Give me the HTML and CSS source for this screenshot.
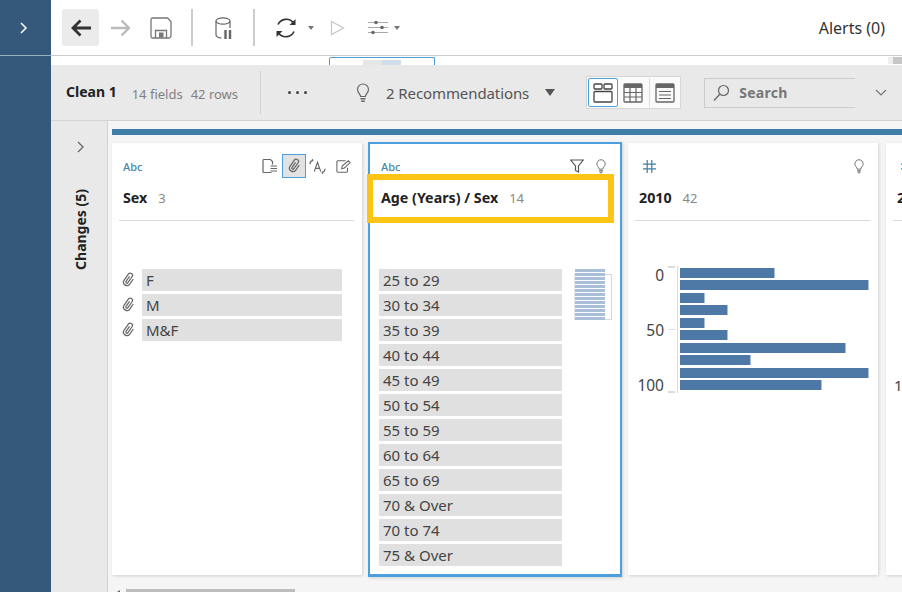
FILE: index.html
```html
<!DOCTYPE html>
<html lang="en">
<head>
  <meta charset="UTF-8" />
  <title>Clean 1</title>
  <link rel="stylesheet" href="styles.css">
</head>
<body>
  <svg class="defs" width="0" height="0">
    <symbol id="clip" viewBox="0 0 16 16">
      <path transform="rotate(35 8 8) translate(3.2 0.5) scale(0.68)" d="M6 6v8a1.5 1.5 0 0 0 3 0V4.500a3 3 0 0 0-6 0V14a4.500 4.500 0 0 0 9 0V6" fill="none" stroke="currentColor" stroke-width="1.600"/>
    </symbol>
    <symbol id="bulb" viewBox="0 0 16 20">
      <path d="M5.600 13.500c0-2.400-3.100-3.600-3.100-7a5.500 5.500 0 0 1 11 0c0 3.400-3.100 4.600-3.100 7z" fill="none" stroke="currentColor" stroke-width="1.200"/>
      <path d="M5.500 15.800h5M6.200 18.200h3.600" stroke="currentColor" stroke-width="1.400"/>
    </symbol>
    <symbol id="hash" viewBox="0 0 13 13">
      <path d="M4.200 0v13M8.800 0v13M0 4.200h13M0 8.800h13" fill="none" stroke="currentColor" stroke-width="1.200"/>
    </symbol>
  </svg>

  <aside class="rail">
    <div class="rail-head">
      <svg width="9" height="14" viewBox="0 0 9 14"><path d="M2 2l5 5-5 5" fill="none" stroke="#fff" stroke-width="1.500"/></svg>
    </div>
  </aside>

  <div class="main">
    <header class="toolbar">
      <button class="tool tool-back">
        <svg width="22" height="20" viewBox="0 0 22 20"><path d="M21 10H3M10.500 2.500L3 10l7.500 7.500" fill="none" stroke="#333" stroke-width="2.800"/></svg>
      </button>
      <svg class="ic-forward" width="22" height="20" viewBox="0 0 22 20"><path d="M1 10h18M11.500 2.500L19 10l-7.500 7.500" fill="none" stroke="#bbb" stroke-width="2.400"/></svg>
      <svg class="ic-save" width="22" height="22" viewBox="0 0 22 22">
        <path d="M2.500 1h15L21 4.500v14a2.500 2.500 0 0 1-2.500 2.500h-16A1.500 1.500 0 0 1 1 19.500v-17A1.500 1.500 0 0 1 2.500 1z" fill="none" stroke="#777" stroke-width="1.300"/>
        <path d="M5.500 21v-7.500h11V21" fill="none" stroke="#777" stroke-width="1.300"/>
        <rect x="9" y="15.500" width="4.500" height="5" fill="#777"/>
      </svg>
      <span class="tool-sep tool-sep-first"></span>
      <svg class="ic-db" width="20" height="24" viewBox="0 0 20 24">
        <ellipse cx="9" cy="5" rx="7" ry="3.200" fill="none" stroke="#666" stroke-width="1.200"/>
        <path d="M2 5v14c0 1.800 3 3 5.500 3M16 5v7" fill="none" stroke="#666" stroke-width="1.200"/>
        <path d="M11.500 14v9M16 14v9" stroke="#666" stroke-width="2.400"/>
      </svg>
      <span class="tool-sep tool-sep-second"></span>
      <svg class="ic-refresh" width="22" height="22" viewBox="0 0 22 22">
        <path d="M3 7.500A9 9 0 0 1 18.500 6M19 14.500A9 9 0 0 1 3.500 16" fill="none" stroke="#333" stroke-width="1.700"/>
        <path d="M20.500 2v6h-6zM1.500 20v-6h6z" fill="#333"/>
      </svg>
      <span class="caret caret-sm caret-refresh"></span>
      <svg class="ic-play" width="15" height="16" viewBox="0 0 15 16"><path d="M1.500 1.500l12 6.500-12 6.500z" fill="none" stroke="#c4c4c4" stroke-width="1.200"/></svg>
      <svg class="ic-sliders" width="20" height="15" viewBox="0 0 20 15">
        <path d="M0 2.500h20M0 7.500h20M0 12.500h20" stroke="#aaa" stroke-width="1.100"/>
        <circle cx="8" cy="2.500" r="1.800" fill="#666"/><circle cx="14" cy="7.500" r="1.800" fill="#666"/><circle cx="5" cy="12.500" r="1.800" fill="#666"/>
      </svg>
      <span class="caret caret-sm caret-sliders"></span>
      <span class="alerts">Alerts (0)</span>
    </header>

    <div class="flow-strip">
      <div class="flow-node"><span class="flow-a"></span><span class="flow-b"></span></div>
      <span class="flow-scroll"></span>
    </div>

    <div class="step-bar">
      <strong class="step-name">Clean 1</strong>
      <span class="step-meta">14 fields</span>
      <span class="step-meta step-rows">42 rows</span>
      <span class="step-sep"></span>
      <span class="dots"><i></i><i></i><i></i></span>
      <svg class="ic-rec" width="16" height="20"><use href="#bulb"/></svg>
      <span class="rec-text">2 Recommendations</span>
      <span class="caret caret-rec"></span>
      <div class="views">
        <button class="view view-on">
          <svg width="20" height="20" viewBox="0 0 20 20" fill="none" stroke="#444" stroke-width="1.300"><rect x="1" y="1" width="8" height="5" rx="1"/><rect x="11" y="1" width="8" height="5" rx="1"/><rect x="1" y="8.500" width="18" height="10.500" rx="1"/></svg>
        </button>
        <button class="view">
          <svg width="20" height="20" viewBox="0 0 20 20"><rect x="1" y="1" width="18" height="18" rx="1" fill="none" stroke="#666" stroke-width="1.300"/><rect x="1" y="1" width="18" height="4" fill="#666"/><path d="M1 9.500h18M1 14h18M7 5v14M13 5v14" stroke="#666" stroke-width="1.200"/></svg>
        </button>
        <span class="view-sep"></span>
        <button class="view">
          <svg width="20" height="20" viewBox="0 0 20 20"><rect x="1" y="1" width="18" height="18" rx="1" fill="none" stroke="#666" stroke-width="1.300"/><rect x="1" y="1" width="18" height="4" fill="#666"/><path d="M4 8.500h12M4 12h12M4 15.500h12" stroke="#666" stroke-width="1.200"/></svg>
        </button>
      </div>
      <div class="search">
        <svg width="17" height="18" viewBox="0 0 17 18"><circle cx="10.500" cy="6.500" r="5" fill="none" stroke="#666" stroke-width="1.200"/><path d="M6.800 10.200L1 16.500" stroke="#666" stroke-width="1.300"/></svg>
        <span>Search</span>
      </div>
      <svg class="ic-more" width="12" height="7" viewBox="0 0 12 7"><path d="M1 1l5 5 5-5" fill="none" stroke="#777" stroke-width="1.200"/></svg>
    </div>

    <div class="workspace">
      <div class="changes">
        <svg width="9" height="14" viewBox="0 0 9 14"><path d="M2 2l5 5-5 5" fill="none" stroke="#666" stroke-width="1.300"/></svg>
        <span class="changes-label">Changes (5)</span>
      </div>

      <div class="board">
        <div class="board-bar"></div>
        <div class="cards">

          <section class="card">
            <div class="card-type">
              <span class="abc">Abc</span>
              <div class="card-tools card-tools-wide">
                <svg width="15" height="16" viewBox="0 0 15 16" fill="none" stroke="#666" stroke-width="1.200"><path d="M9.500 14.500H2a1 1 0 0 1-1-1v-11a1 1 0 0 1 1-1h6.500l2 2v3"/><path d="M8.500 8H15M8.500 10.500H15M8.500 13H15"/></svg>
                <span class="tool-on"><svg width="18" height="18"><use href="#clip"/></svg></span>
                <svg class="ic-alias" width="17" height="18" viewBox="0 0 18 18" fill="none" stroke="#666" stroke-width="1.200"><path d="M5.500 15L9 5l3.500 10M6.800 11.500h4.400"/><path d="M1 7a4.500 4.500 0 0 1 3-4M17 12a4.500 4.500 0 0 1-3 4"/><path d="M3 1.500l1.500 1.500-2 1M15 17.500L13.500 16l2-1" stroke-width="1"/></svg>
                <svg class="ic-edit" width="15" height="15" viewBox="0 0 17 16" fill="none" stroke="#666" stroke-width="1.200"><path d="M13 9.500v4a1 1 0 0 1-1 1H2a1 1 0 0 1-1-1v-11a1 1 0 0 1 1-1h9"/><path d="M6.500 10.500l.5-3 7-6 2 2-6.500 6.200z"/></svg>
              </div>
            </div>
            <div class="card-name"><strong>Sex</strong><span class="count">3</span></div>
            <ul class="values values-clip">
              <li><svg class="clip" width="18" height="18"><use href="#clip"/></svg><span>F</span></li>
              <li><svg class="clip" width="18" height="18"><use href="#clip"/></svg><span>M</span></li>
              <li><svg class="clip" width="18" height="18"><use href="#clip"/></svg><span>M&amp;F</span></li>
            </ul>
          </section>

          <section class="card card-active">
            <div class="card-type">
              <span class="abc">Abc</span>
              <div class="card-tools">
                <svg width="14" height="14" viewBox="0 0 14 14"><path d="M.700 1h12.600L8.500 7v6L5.500 11.500V7z" fill="none" stroke="#555" stroke-width="1.200"/></svg>
                <svg class="bulb" width="12" height="15"><use href="#bulb"/></svg>
              </div>
            </div>
            <div class="card-name"><strong>Age (Years) / Sex</strong><span class="count">14</span></div>
            <div class="card-mark"></div>
            <div class="values-wrap">
              <ul class="values">
                <li><span>25 to 29</span></li>
                <li><span>30 to 34</span></li>
                <li><span>35 to 39</span></li>
                <li><span>40 to 44</span></li>
                <li><span>45 to 49</span></li>
                <li><span>50 to 54</span></li>
                <li><span>55 to 59</span></li>
                <li><span>60 to 64</span></li>
                <li><span>65 to 69</span></li>
                <li><span>70 &amp; Over</span></li>
                <li><span>70 to 74</span></li>
                <li><span>75 &amp; Over</span></li>
              </ul>
              <div class="overview">
                <div class="overview-lines"></div>
              </div>
            </div>
          </section>

          <section class="card">
            <div class="card-type">
              <svg class="hash" width="13" height="13"><use href="#hash"/></svg>
              <div class="card-tools">
                <svg class="bulb" width="12" height="15"><use href="#bulb"/></svg>
              </div>
            </div>
            <div class="card-name"><strong>2010</strong><span class="count">42</span></div>
            <div class="chart">
              <div class="axis-labels"><span>0</span><span>50</span><span>100</span></div>
              <div class="axis-ticks"><i class="tick-end"></i><i class="tick-mid"></i><i class="tick-end"></i></div>
              <div class="bars">
                <div class="bar" style="width: 95px"></div>
                <div class="bar" style="width: 189px"></div>
                <div class="bar" style="width: 25px"></div>
                <div class="bar" style="width: 48px"></div>
                <div class="bar" style="width: 25px"></div>
                <div class="bar" style="width: 48px"></div>
                <div class="bar" style="width: 166px"></div>
                <div class="bar" style="width: 71px"></div>
                <div class="bar" style="width: 189px"></div>
                <div class="bar" style="width: 142px"></div>
              </div>
            </div>
          </section>

          <section class="card card-next">
            <div class="card-type"><svg class="hash" width="13" height="13"><use href="#hash"/></svg></div>
            <div class="card-name"><strong>2011</strong></div>
            <div class="next-label">100</div>
          </section>

        </div>
        <div class="scroll">
          <span class="scroll-arrow"></span>
          <span class="scroll-thumb"></span>
        </div>
      </div>
    </div>
  </div>
</body>
</html>
```
FILE: styles.css
```css
* {
  box-sizing: border-box;
}

html, body {
  height: 100%;
}

body {
  margin: 0;
  display: flex;
  overflow: hidden;
  background: #fff;
  font-family: "Noto Sans", "Open Sans", sans-serif;
  color: #333;
}

.defs {
  position: absolute;
}

button {
  display: flex;
  align-items: center;
  justify-content: center;
  padding: 0;
  border: none;
  background: none;
}

/* left rail */
.rail {
  flex: 0 0 51px;
  background: #34597b;
}

.rail-head {
  display: flex;
  align-items: center;
  height: 56px;
  padding-left: 19px;
  border-bottom: 1px solid #9db0c2;
}

.main {
  flex: 1;
  min-width: 0;
  display: flex;
  flex-direction: column;
}

/* top toolbar */
.toolbar {
  display: flex;
  align-items: center;
  height: 56px;
  padding-left: 11px;
  border-bottom: 1px solid #ccc;
}

.tool-back {
  width: 37px;
  height: 37px;
  background: #ebebeb;
  border-radius: 3px;
}

.ic-forward {
  margin-left: 11px;
}

.ic-save {
  margin-left: 18px;
}

.tool-sep {
  width: 2px;
  height: 37px;
  background: #ccc;
}

.tool-sep-first {
  margin-left: 19px;
}

.ic-db {
  margin-left: 21px;
}

.tool-sep-second {
  margin-left: 19px;
}

.ic-refresh {
  margin-left: 20px;
}

.caret {
  width: 0;
  height: 0;
  border-left: 5px solid transparent;
  border-right: 5px solid transparent;
  border-top: 7px solid #555;
}

.caret-sm {
  border-left-width: 3.500px;
  border-right-width: 3.500px;
  border-top-width: 4px;
  border-top-color: #777;
}

.caret-refresh {
  margin-left: 11px;
}

.ic-play {
  margin-left: 16px;
}

.ic-sliders {
  margin-left: 23px;
}

.caret-sliders {
  margin-left: 6px;
}

.alerts {
  margin-left: auto;
  margin-right: 17px;
  font-size: 16px;
  color: #333;
}

/* flow strip under the toolbar */
.flow-strip {
  display: flex;
  align-items: flex-end;
  height: 9px;
  padding-left: 278px;
}

.flow-node {
  display: flex;
  width: 106px;
  height: 8px;
  padding-left: 33px;
  border: 1px solid #4a9fdc;
  border-bottom: none;
  border-radius: 2px 2px 0 0;
}

.flow-a {
  width: 19px;
  margin-top: 2px;
  background: #e6e6e6;
}

.flow-b {
  width: 19px;
  margin-top: 2px;
  background: #cfdde8;
}

.flow-scroll {
  width: 14px;
  height: 7px;
  margin-left: auto;
  margin-bottom: 1px;
  background: linear-gradient(to right, #eee 35%, #c6c6c6 35%);
}

/* step bar */
.step-bar {
  display: flex;
  align-items: center;
  height: 56px;
  padding-left: 15px;
  background: #e9e9e9;
  border-bottom: 1px solid #d2d2d2;
}

.step-name {
  margin-top: -2px;
  font-size: 14px;
  color: #222;
}

.step-meta {
  margin-left: 15px;
  margin-top: 3px;
  font-size: 13px;
  color: #808080;
}

.step-rows {
  margin-left: 8px;
}

.step-sep {
  width: 1px;
  height: 43px;
  margin-left: 22px;
  background: #d2d2d2;
}

.dots {
  display: flex;
  gap: 5px;
  margin-left: 27px;
}

.dots i {
  width: 3px;
  height: 3px;
  border-radius: 50%;
  background: #444;
}

.ic-rec {
  margin-left: 48px;
  color: #666;
}

.rec-text {
  margin-left: 15px;
  font-size: 15px;
  letter-spacing: -0.1px;
  color: #555;
}

.caret-rec {
  margin-left: 16px;
}

.views {
  display: flex;
  align-items: center;
  width: 95px;
  height: 33px;
  margin-left: 31px;
  padding-left: 1px;
  background: #fafafa;
  border: 1px solid #d6d6d6;
}

.view {
  width: 30px;
  height: 29px;
}

.view-on {
  background: #fff;
  border: 1px solid #4a9fdc;
  border-radius: 2px;
}

.view-sep {
  width: 1px;
  height: 29px;
  margin: 0 1px;
  background: #ddd;
}

.search {
  display: flex;
  align-items: center;
  gap: 9px;
  width: 151px;
  height: 30px;
  margin-left: 23px;
  padding-left: 8px;
  border: 1px solid #ccc;
  border-right: none;
  font-size: 14px;
  font-weight: 700;
  letter-spacing: 0.3px;
  color: #777;
}

.ic-more {
  margin-left: 20px;
}

/* workspace */
.workspace {
  flex: 1;
  min-height: 0;
  display: flex;
  background: #f5f5f5;
}

.changes {
  flex: 0 0 57px;
  display: flex;
  flex-direction: column;
  align-items: center;
  padding-top: 19px;
  padding-left: 3px;
  background: #e9e9e9;
  border-right: 1px solid #d2d2d2;
}

.changes-label {
  margin-top: 35px;
  writing-mode: vertical-rl;
  transform: rotate(180deg);
  font-size: 14px;
  font-weight: 700;
  color: #222;
}

.board {
  flex: 1;
  min-width: 0;
  display: flex;
  flex-direction: column;
  padding: 8px 0 0 4px;
}

.board-bar {
  height: 6px;
  background: #3f7ea6;
}

.cards {
  display: flex;
  gap: 6px;
  height: 432px;
  margin-top: 8px;
}

.card {
  flex: 0 0 250px;
  position: relative;
  padding: 0 8px 0 7px;
  background: #fff;
  box-shadow: 1px 1px 3px rgba(0,0,0,0.15);
}

.card-active {
  flex-basis: 253px;
  margin: -1px 0 -2px;
  padding: 0 8px 0 9px;
  border: 2px solid #4a9fdc;
  border-bottom-width: 3px;
}

.card-active .card-type {
  margin-top: -1px;
  padding-left: 2px;
}

.card-active .card-name {
  padding-left: 2px;
}

.card-next {
  flex-basis: 200px;
  margin-left: 2px;
}

.card-type {
  display: flex;
  align-items: center;
  justify-content: space-between;
  height: 44px;
  padding-left: 4px;
  padding-top: 2px;
}

.abc {
  font-size: 11px;
  font-weight: 500;
  color: #4a87a8;
}

.hash {
  margin-left: 4px;
  color: #3f7ea6;
}

.card-tools {
  display: flex;
  align-items: center;
  gap: 4px;
  color: #666;
}

.card-tools-wide {
  margin-right: 3px;
  gap: 5px;
}

.ic-alias {
  margin-left: -2px;
}

.ic-edit {
  margin-left: 5px;
}

.tool-on {
  display: flex;
  align-items: center;
  justify-content: center;
  width: 24px;
  height: 24px;
  background: #e2e2e2;
  border: 1px solid #4a9fdc;
}

.bulb {
  margin: 0 5px 0 7px;
}

.card-name {
  display: flex;
  align-items: center;
  height: 34px;
  padding-left: 4px;
  padding-bottom: 12px;
  border-bottom: 1px solid #d8d8d8;
  font-size: 14.250px;
  color: #222;
}

.count {
  margin-left: 11px;
  font-size: 13px;
  color: #888;
}

.card-mark {
  position: absolute;
  left: -3px;
  top: 30px;
  width: 247px;
  height: 49px;
  border: 6px solid #fcc515;
  background: transparent;
}

.values {
  display: flex;
  flex-direction: column;
  gap: 3px;
  margin: 48px 0 0;
  padding: 0;
  list-style: none;
  font-size: 15px;
  color: #444;
}

.values li {
  display: flex;
  align-items: center;
}

.values span {
  flex: 1;
  height: 22px;
  padding-left: 4px;
  line-height: 22px;
  background: #e0e0e0;
}

.values-clip {
  padding-right: 12px;
}

.clip {
  margin-right: 5px;
  color: #666;
}

.values-wrap {
  display: flex;
}

.values-wrap .values {
  width: 183px;
}

.overview {
  width: 38px;
  height: 46px;
  margin: 53px 0 0 12px;
  border: 1px solid #d8d8d8;
  border-left-color: #e6e6e6;
}

.overview-lines {
  width: 30px;
  height: 51px;
  margin-top: -6px;
  background: repeating-linear-gradient(to bottom, #a9bfd8 0, #a9bfd8 3px, #fff 3px, #fff 4px);
}

/* bar chart in the 2010 card */
.chart {
  display: flex;
  margin-top: 45px;
  height: 132px;
}

.axis-labels {
  display: flex;
  flex-direction: column;
  justify-content: space-between;
  align-items: flex-end;
  width: 29px;
  height: 130px;
  margin-top: -1px;
  font-size: 15.500px;
  line-height: 20px;
  color: #444;
}

.axis-ticks {
  display: flex;
  flex-direction: column;
  justify-content: space-between;
  align-items: flex-end;
  width: 14px;
  height: 127px;
  border-right: 1px solid #ddd;
}

.axis-ticks i {
  display: block;
  height: 2px;
  margin-right: 2px;
  background: #ddd;
}

.tick-end {
  width: 7px;
}

.axis-ticks .tick-mid {
  width: 6px;
  height: 1px;
}

.bars {
  display: flex;
  flex-direction: column;
  margin-left: 2px;
  padding-top: 2px;
}

.bar {
  height: 10px;
  margin-bottom: 2px;
  background: #4e79a7;
  border-right: 1px solid #a9bfd8;
}

.bar:nth-child(even) {
  margin-bottom: 3px;
}

.next-label {
  margin-top: 154px;
  padding-left: 1px;
  font-size: 15px;
  color: #444;
}

/* bottom scroll */
.scroll {
  display: flex;
  align-items: flex-end;
  flex: 1;
}

.scroll-arrow {
  width: 0;
  height: 0;
  margin-left: 5px;
  border-top: 2px solid transparent;
  border-right: 3px solid #666;
}

.scroll-thumb {
  width: 169px;
  height: 3px;
  margin-left: 6px;
  background: #bdbdbd;
}
```
